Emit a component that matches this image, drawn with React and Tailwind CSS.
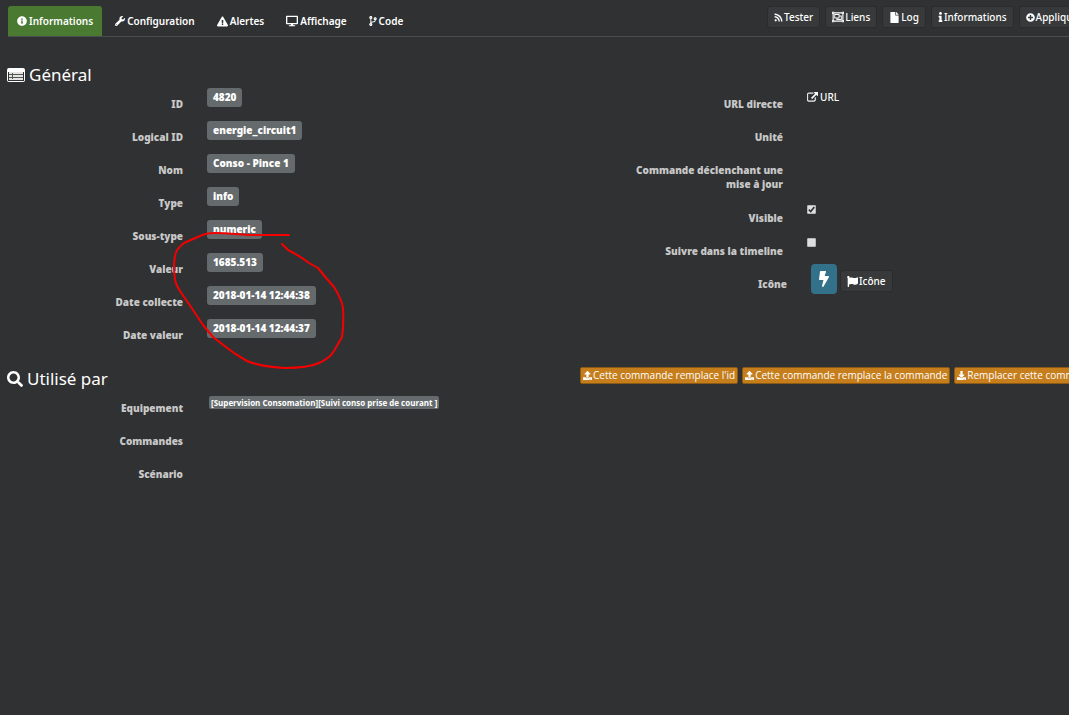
import React, { useState } from 'react';
import {
  FaInfoCircle,
  FaWrench,
  FaExclamationTriangle,
  FaDesktop,
  FaCodeBranch,
  FaRss,
  FaRegObjectGroup,
  FaFile,
  FaInfo,
  FaPlusCircle,
  FaSearch,
  FaUpload,
  FaDownload,
  FaBolt,
  FaFlag,
} from 'react-icons/fa';

const tabs = [
  { id: 'informations', label: 'Informations', icon: FaInfoCircle, size: 'size-[10px]' },
  { id: 'configuration', label: 'Configuration', icon: FaWrench, size: 'size-[10px]' },
  { id: 'alertes', label: 'Alertes', icon: FaExclamationTriangle, size: 'size-[11px]' },
  { id: 'affichage', label: 'Affichage', icon: FaDesktop, size: 'size-3' },
  { id: 'code', label: 'Code', icon: FaCodeBranch, size: 'h-[10px] w-[8px]' },
];

const actions = [
  { label: 'Tester', icon: FaRss, size: 'size-[9px]' },
  { label: 'Liens', icon: FaRegObjectGroup, size: 'size-3' },
  { label: 'Log', icon: FaFile, size: 'size-[11px]' },
  { label: 'Informations', icon: FaInfo, size: 'h-[10px] w-[5px]' },
  { label: 'Appliquer', icon: FaPlusCircle, size: 'size-[9px]' },
];

const details = [
  { label: 'ID', value: '4820' },
  { label: 'Logical ID', value: 'energie_circuit1' },
  { label: 'Nom', value: 'Conso - Pince 1' },
  { label: 'Type', value: 'info' },
  { label: 'Sous-type', value: 'numeric' },
  { label: 'Valeur', value: '1685.513' },
  { label: 'Date collecte', value: '2018-01-14 12:44:38' },
  { label: 'Date valeur', value: '2018-01-14 12:44:37' },
];

const replaceActions = [
  { label: "Cette commande remplace l'id", icon: FaUpload },
  { label: 'Cette commande remplace la commande', icon: FaUpload },
  { label: 'Remplacer cette commande par la commande', icon: FaDownload },
];

const ExternalLinkIcon = () => (
  <svg viewBox="0 0 1792 1792" className="size-[11px]" fill="currentColor" aria-hidden="true">
    <path d="M1408 928v320q0 119-84.500 203.500T1120 1536H288q-119 0-203.500-84.500T0 1248V416q0-119 84.500-203.500T288 128h704q14 0 23 9t9 23v64q0 14-9 23t-23 9H288q-66 0-113 47t-47 113v832q0 66 47 113t113 47h832q66 0 113-47t47-113V928q0-14 9-23t23-9h64q14 0 23 9t9 23zm384-864v512q0 26-19 45t-45 19-45-19l-176-176-652 652q-10 10-23 10t-23-10L695 983q-10-10-10-23t10-23l652-652-176-176q-19-19-19-45t19-45 45-19h512q26 0 45 19t19 45z" stroke="currentColor" strokeWidth="60" />
  </svg>
);

const ListIcon = () => (
  <svg viewBox="0 0 18 14" className="h-[14px] w-[18px]" aria-hidden="true">
    <rect width="18" height="14" rx="2" fill="#fff" />
    <path d="M1 4h16v9H1z" fill="#303132" />
    <path d="M2 4h14v8H2z" fill="#e4e4e2" />
    <path d="M2 6h14v1H2zM2 9h14v1H2zM5 5h1v6H5z" fill="#555" />
  </svg>
);

const Row = ({ label, htmlFor, children }) => (
  <div className="flex min-h-[33px] items-start gap-6">
    <label
      htmlFor={htmlFor}
      className="w-[176px] shrink-0 pl-5 pt-[9px] text-right font-black leading-[14px] text-[#c8c8c8]"
    >
      {label}
    </label>
    <div className="min-w-0">{children}</div>
  </div>
);

const Checkbox = ({ id, checked, onChange }) => (
  <span className="relative mt-[3px] block size-[9px]">
    <input
      id={id}
      type="checkbox"
      checked={checked}
      onChange={(e) => onChange(e.target.checked)}
      className="peer block size-[9px] appearance-none rounded-[1px] border border-[#b8b8b8] bg-[#dedede]"
    />
    <svg
      viewBox="0 0 9 9"
      className="pointer-events-none absolute inset-0 hidden size-[9px] peer-checked:block"
      fill="none"
      stroke="#333"
      strokeWidth="1.700"
      aria-hidden="true"
    >
      <path d="M1.800 4.600L3.800 6.500L7.300 2" />
    </svg>
  </span>
);

// Hand-drawn circle around the values
const Annotation = () => (
  <svg
    viewBox="170 228 180 144"
    className="pointer-events-none absolute left-[170px] top-[228px] h-[144px] w-[180px]"
    fill="none"
    stroke="#f50000"
    strokeWidth="2"
    strokeLinecap="round"
    strokeLinejoin="round"
    aria-hidden="true"
  >
    <path d="M289 235H250C235 234 225 233 215 233Q206 233 200 236L184 243Q176 249 175 256Q173 266 175 280Q176 285 180 291L191 307L203 325L213 337L222 344Q234 354 247 361Q262 367 285 368Q308 368 319 363Q330 358 334 351L342 337Q344 325 343 308Q342 300 334 287L327 279L318 268L309 263Q300 256 288 250L282 244" />
  </svg>
);

const App = () => {
  const [activeTab, setActiveTab] = useState('informations');
  const [visible, setVisible] = useState(true);
  const [timeline, setTimeline] = useState(false);

  return (
    <div className="relative min-h-screen overflow-hidden bg-[#303132] font-['Noto_Sans',sans-serif] text-[10px] text-white">
      <header className="ml-2 flex h-[37px] items-start justify-between border-b border-[#4b4d4e] pt-[6px]">
        <nav className="flex gap-1 font-semibold">
          {tabs.map(({ id, label, icon: Icon, size }) => (
            <button
              key={id}
              type="button"
              onClick={() => setActiveTab(id)}
              className={`flex h-[30px] items-center gap-[2px] rounded-t-[3px] px-[9px] ${
                activeTab === id ? 'bg-[#4a7a32]' : ''
              }`}
            >
              <Icon className={size} />
              {label}
            </button>
          ))}
        </nav>
        <div className="flex w-[302px] shrink-0 gap-[5px] overflow-hidden font-medium">
          {actions.map(({ label, icon: Icon, size }) => (
            <button
              key={label}
              type="button"
              className="flex h-[22px] shrink-0 items-center gap-px rounded-[3px] border border-[#2a2c2d] bg-[#37393a] px-[6px]"
            >
              <Icon className={size} />
              {label}
            </button>
          ))}
        </div>
      </header>

      <main className="pl-[7px] pt-6">
        <h2 className="flex h-[27px] items-center gap-1 text-[17px]">
          <ListIcon />
          Général
        </h2>
        <div className="mb-[14px] grid grid-cols-[600px_1fr]">
          <div>
            {details.map(({ label, value }) => (
              <Row key={label} label={label}>
                <span className="block h-[19px] rounded-[3px] bg-[#656a6c] px-[6px] font-black leading-[19px]">
                  {value}
                </span>
              </Row>
            ))}
          </div>
          <div>
            <Row label="URL directe">
              <a href="#url" className="flex h-[19px] items-center gap-[2px] font-medium">
                <ExternalLinkIcon />
                URL
              </a>
            </Row>
            <Row label="Unité" />
            <div className="mb-[11px]">
              <Row label="Commande déclenchant une mise à jour" />
            </div>
            <Row label="Visible" htmlFor="visible">
              <Checkbox id="visible" checked={visible} onChange={setVisible} />
            </Row>
            <Row label="Suivre dans la timeline" htmlFor="timeline">
              <Checkbox id="timeline" checked={timeline} onChange={setTimeline} />
            </Row>
            <div className="h-[26px] pl-1">
              <Row label="Icône">
                <div className="-mt-1 flex items-center gap-[3px]">
                  <span className="flex h-[30px] w-[26px] items-center justify-center rounded bg-[#33708a]">
                    <FaBolt className="size-4" />
                  </span>
                  <button
                    type="button"
                    className="mt-1 flex h-[22px] items-center gap-px rounded-[3px] border border-[#2a2c2d] bg-[#37393a] px-[6px] font-medium"
                  >
                    <FaFlag className="size-[11px]" />
                    Icône
                  </button>
                </div>
              </Row>
            </div>
          </div>
        </div>

        <div className="mb-px flex h-[25px] items-center justify-between">
          <h2 className="flex items-center gap-1 text-[17px]">
            <FaSearch className="size-4" />
            Utilisé par
          </h2>
          <div className="-mt-[6px] flex w-[489px] shrink-0 gap-1 overflow-hidden font-['Open_Sans','Noto_Sans',sans-serif]">
            {replaceActions.map(({ label, icon: Icon }) => (
              <button
                key={label}
                type="button"
                className="flex h-[17px] shrink-0 items-center gap-px rounded-[2px] border border-[#8a5a14] bg-[#c67e1c] px-[2px]"
              >
                <Icon className="size-[9px]" />
                {label}
              </button>
            ))}
          </div>
        </div>
        <Row label="Equipement">
          <a
            href="#equipement"
            className="ml-[2px] mt-1 block rounded-[2px] bg-[#656a6c] px-[2px] font-['Open_Sans','Noto_Sans',sans-serif] text-[8px] font-bold leading-[13px]"
          >
            [Supervision Consomation][Suivi conso prise de courant ]
          </a>
        </Row>
        <Row label="Commandes" />
        <Row label="Scénario" />
      </main>

      <Annotation />
    </div>
  );
};

export default App;
